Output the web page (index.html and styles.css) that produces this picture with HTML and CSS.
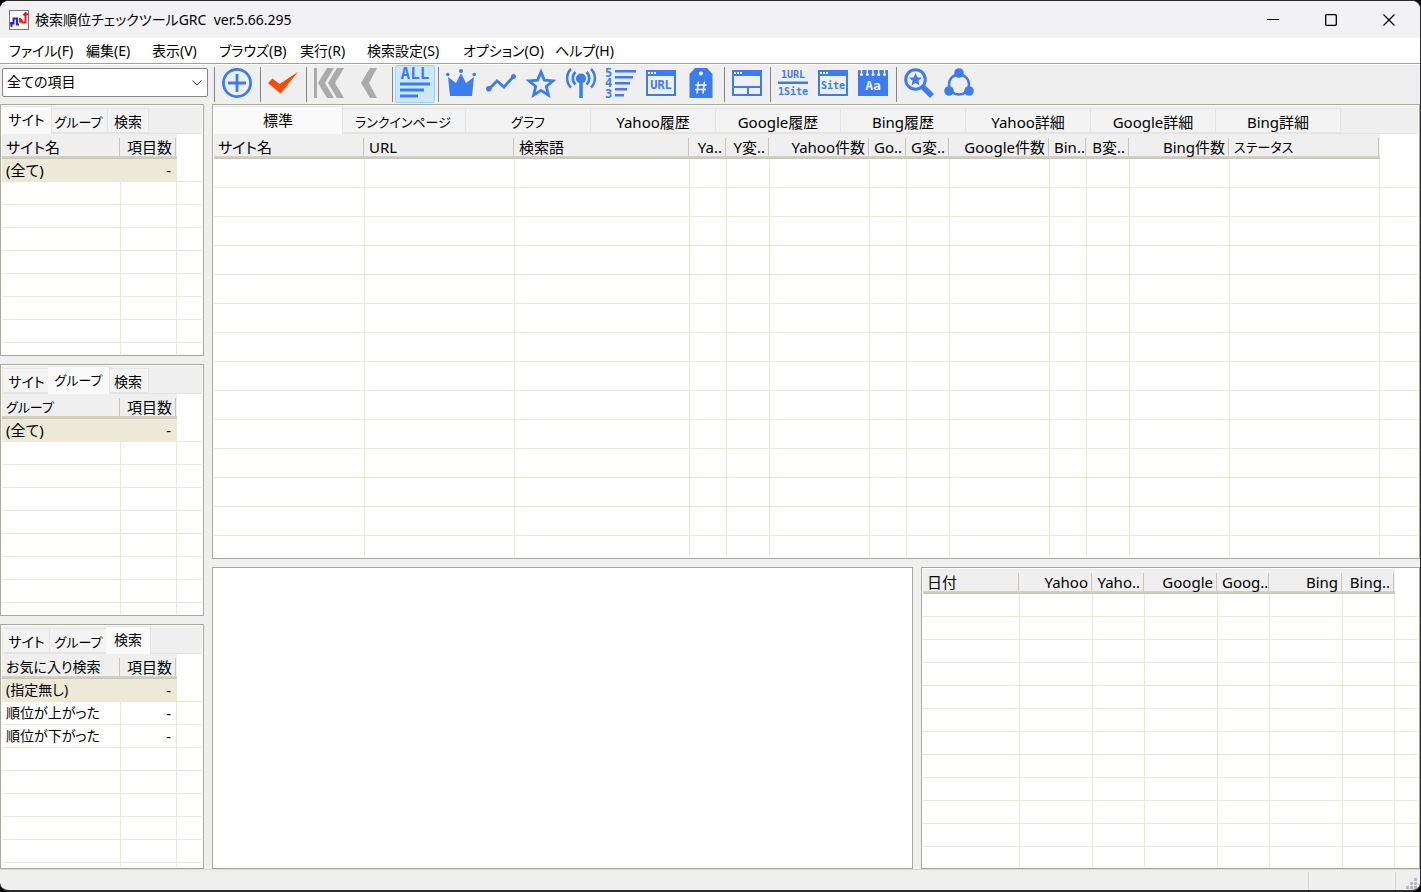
FILE: index.html
```html
<!DOCTYPE html>
<html lang="ja">
<head>
<meta charset="utf-8">
<title>検索順位チェックツールGRC</title>
<link rel="stylesheet" href="styles.css">
</head>
<body>
<div class="window">
  <header class="titlebar">
    <svg class="app-icon" width="20" height="20" viewBox="0 0 20 20"><rect x=".5" y=".5" width="19" height="19" fill="#fff" stroke="#777"/><path d="M2.500 17v-5M1 13.500h3.500V8.500h3.500v6h2" fill="none" stroke="#2020f0" stroke-width="2"/><path d="M11 12.500V8M12 9l1.500 3.500h3V4M14.500 5.500L16.500 3l2.500 2" fill="none" stroke="#f01818" stroke-width="2"/></svg>
    <h1 class="title">検索順位チェックツールGRC&nbsp; ver.5.66.295</h1>
    <div class="window-controls">
      <button class="win-btn" aria-label="最小化"><svg width="12" height="12"><path d="M0 5.500h12" stroke="#000"/></svg></button>
      <button class="win-btn" aria-label="最大化"><svg width="12" height="12"><rect x=".7" y=".7" width="10.600" height="10.600" rx="1" fill="none" stroke="#000" stroke-width="1.300"/></svg></button>
      <button class="win-btn" aria-label="閉じる"><svg width="12" height="12"><path d="M.5.5l11 11M11.500.5l-11 11" stroke="#000" stroke-width="1.200"/></svg></button>
    </div>
  </header>
  <nav class="menubar">
    <button>ファイル(F)</button><button>編集(E)</button><button>表示(V)</button><button>ブラウズ(B)</button><button>実行(R)</button><button>検索設定(S)</button><button>オプション(O)</button><button>ヘルプ(H)</button>
  </nav>
  <div class="toolbar">
    <div class="combo">
      <select class="combo-select" aria-label="項目"><option>全ての項目</option></select>
      <svg class="combo-arrow" width="10" height="6"><path d="M.5.5L5 5 9.500.5" fill="none" stroke="#444"/></svg>
    </div>
    <span class="sep"></span>
    <button class="tool" aria-label="追加"><svg viewBox="0 0 30 30"><circle cx="15" cy="15" r="13.600" fill="none" stroke="#3b7df0" stroke-width="2.800"/><path d="M15 6v18M6 15h18" stroke="#3b7df0" stroke-width="2.800"/></svg></button>
    <span class="sep"></span>
    <button class="tool" aria-label="チェック"><svg viewBox="0 0 30 30"><path d="M0 15l4.500-4.500 7 5.500L30 4 12.500 25.500z" fill="#ff4800"/></svg></button>
    <span class="sep"></span>
    <button class="tool" aria-label="最初へ"><svg viewBox="0 0 30 30" fill="#ababab"><path d="M0 0h3v30H0zM13 0h7l-9 15 9 15h-7L4 15zM23 0h7l-9 15 9 15h-7l-9-15z"/></svg></button>
    <button class="tool" aria-label="前へ"><svg viewBox="0 0 30 30" fill="#ababab"><path d="M16 0h7l-8 15 8 15h-7L7 15z"/></svg></button>
    <span class="sep"></span>
    <button class="tool selected" aria-label="全て表示"><svg viewBox="0 0 30 30" fill="#3b7df0"><text class="glyph" x="15" y="11" font-size="16" text-anchor="middle">ALL</text><path d="M0 14.500h30v3H0zM0 20.500h24v3H0zM0 26.500h18v3H0z"/></svg></button>
    <span class="sep"></span>
    <button class="tool" aria-label="王冠"><svg viewBox="0 0 30 30" fill="#3b7df0"><path d="M2 9l8 6 5-10 5 10 8-6-2 19H4z"/><circle cx="1.800" cy="6.500" r="1.800"/><circle cx="15" cy="3" r="2"/><circle cx="28.200" cy="6.500" r="1.800"/></svg></button>
    <button class="tool" aria-label="変動"><svg viewBox="0 0 30 30"><path d="M3 21l8-8 7 6L28 8" fill="none" stroke="#3b7df0" stroke-width="2.800"/><g fill="#3b7df0"><circle cx="2.800" cy="20.800" r="2.800"/><circle cx="27.500" cy="8.500" r="2.500"/></g></svg></button>
    <button class="tool" aria-label="お気に入り"><svg viewBox="0 0 30 30"><path d="M15 4l3.300 8.100 8.700.7-6.700 5.700 2.100 8.600-7.400-4.700-7.400 4.700 2.100-8.600L3 12.800l8.700-.7z" fill="none" stroke="#3b7df0" stroke-width="2.800"/></svg></button>
    <button class="tool" aria-label="電波"><svg viewBox="0 0 30 30"><g fill="none" stroke="#3b7df0" stroke-width="2.500"><path d="M5 1a13 13 0 0 0 0 18.500M9.500 4a8.500 8.500 0 0 0 0 12.500M25 1a13 13 0 0 1 0 18.500M20.500 4a8.500 8.500 0 0 1 0 12.500"/><path d="M15 10v20" stroke-width="3.500"/></g><circle cx="15" cy="10.500" r="5" fill="#3b7df0"/></svg></button>
    <button class="tool" aria-label="順位"><svg viewBox="0 0 30 30" fill="#3b7df0"><text class="glyph" font-size="12"><tspan x="-1" y="9">5</tspan><tspan x="-1" y="19">4</tspan><tspan x="-1" y="30">3</tspan></text><path d="M9 2h21v2.500H9zM9 8h18v2.500H9zM9 14h15v2.500H9zM9 20h12v2.500H9zM9 26h9v2.500H9z"/></svg></button>
    <button class="tool" aria-label="URL"><svg viewBox="0 0 30 30" fill="#3b7df0"><path fill-rule="evenodd" d="M0 2h30v26H0zM2 8v18h26V8zM2 4v2h2V4zM5 4v2h2V4zM8 4v2h2V4z"/><text class="glyph" x="15" y="21" font-size="12" text-anchor="middle">URL</text></svg></button>
    <button class="tool" aria-label="タグ"><svg viewBox="0 0 30 30"><path d="M9 0h12l5.500 6v24h-23V6z" fill="#3b7df0"/><circle cx="15" cy="5.500" r="2" fill="#fff"/><path d="M12.500 13.500l-1.500 12M18.500 13.500l-1.500 12M9.500 17h11M9 21.500h11" stroke="#fff" stroke-width="1.500"/></svg></button>
    <span class="sep"></span>
    <button class="tool" aria-label="分割表示"><svg viewBox="0 0 30 30" fill="#3b7df0"><path fill-rule="evenodd" d="M0 2h30v26H0zM2 8v10h26V8zM2 20v6h13v-6zM17 20v6h11v-6zM2 4v2h2V4zM5 4v2h2V4zM8 4v2h2V4z"/></svg></button>
    <span class="sep"></span>
    <button class="tool" aria-label="1URL 1Site"><svg viewBox="0 0 30 30" fill="#3b7df0"><text class="glyph" font-size="10" text-anchor="middle"><tspan x="15" y="10">1URL</tspan><tspan x="15" y="27">1Site</tspan></text><path d="M0 13.500h30v2.500H0z"/></svg></button>
    <button class="tool" aria-label="Site"><svg viewBox="0 0 30 30" fill="#3b7df0"><path fill-rule="evenodd" d="M0 2h30v26H0zM2 8v18h26V8zM2 4v2h2V4zM5 4v2h2V4zM8 4v2h2V4z"/><text class="glyph" x="15" y="21" font-size="10" text-anchor="middle">Site</text></svg></button>
    <button class="tool" aria-label="メモ"><svg viewBox="0 0 30 30"><path d="M0 2h30v26H0z" fill="#3b7df0"/><path d="M3.500 1v6M9.300 1v6M15 1v6M20.700 1v6M26.500 1v6" stroke="#efefef" stroke-width="1.500"/><g fill="#efefef"><circle cx="3.500" cy="6.500" r="1.500"/><circle cx="9.300" cy="6.500" r="1.500"/><circle cx="15" cy="6.500" r="1.500"/><circle cx="20.700" cy="6.500" r="1.500"/><circle cx="26.500" cy="6.500" r="1.500"/><text class="glyph" x="15" y="22" font-size="13" text-anchor="middle">Aa</text></g></svg></button>
    <span class="sep"></span>
    <button class="tool" aria-label="お気に入り検索"><svg viewBox="0 0 30 30"><circle cx="11.500" cy="11.500" r="9.800" fill="none" stroke="#3b7df0" stroke-width="3"/><path d="M19 19l9 9" stroke="#3b7df0" stroke-width="5.500"/><path d="M11.500 5l1.800 4.300 4.700.4-3.600 3.100 1.100 4.600-4-2.400-4 2.400 1.100-4.600L5 9.700l4.700-.4z" fill="#3b7df0"/></svg></button>
    <button class="tool" aria-label="共有"><svg viewBox="0 0 30 30"><circle cx="15" cy="16.500" r="10" fill="none" stroke="#3b7df0" stroke-width="2.500"/><g fill="#3b7df0"><circle cx="15" cy="5" r="4.800"/><circle cx="5" cy="23" r="4.800"/><circle cx="25" cy="23" r="4.800"/></g></svg></button>
  </div>
  <main class="workspace">
    <aside class="sidebar">
      <section class="panel">
        <div class="tabs side-tabs"><button class="tab active">サイト</button><button class="tab kana">グループ</button><button class="tab">検索</button></div>
        <div class="grid-view"><table data-rows="8">
          <colgroup><col class="w-name"><col class="w-count"><col></colgroup>
          <thead><tr><th>サイト名</th><th class="num">項目数</th><td></td></tr></thead>
          <tbody><tr class="picked"><td>(全て)</td><td class="num">-</td><td></td></tr></tbody>
        </table></div>
      </section>
      <section class="panel">
        <div class="tabs side-tabs"><button class="tab">サイト</button><button class="tab kana active">グループ</button><button class="tab">検索</button></div>
        <div class="grid-view"><table data-rows="8">
          <colgroup><col class="w-name"><col class="w-count"><col></colgroup>
          <thead><tr><th class="kana">グループ</th><th class="num">項目数</th><td></td></tr></thead>
          <tbody><tr class="picked"><td>(全て)</td><td class="num">-</td><td></td></tr></tbody>
        </table></div>
      </section>
      <section class="panel">
        <div class="tabs side-tabs"><button class="tab">サイト</button><button class="tab kana">グループ</button><button class="tab active">検索</button></div>
        <div class="grid-view"><table class="wordy" data-rows="6">
          <colgroup><col class="w-name"><col class="w-count"><col></colgroup>
          <thead><tr><th>お気に入り検索</th><th class="num">項目数</th><td></td></tr></thead>
          <tbody><tr class="picked"><td>(指定無し)</td><td class="num">-</td><td></td></tr><tr><td>順位が上がった</td><td class="num">-</td><td></td></tr><tr><td>順位が下がった</td><td class="num">-</td><td></td></tr></tbody>
        </table></div>
      </section>
    </aside>
    <div class="content">
      <section class="panel">
        <div class="tabs main-tabs"><button class="tab active">標準</button><button class="tab kana">ランクインページ</button><button class="tab kana">グラフ</button><button class="tab">Yahoo履歴</button><button class="tab">Google履歴</button><button class="tab">Bing履歴</button><button class="tab">Yahoo詳細</button><button class="tab">Google詳細</button><button class="tab">Bing詳細</button></div>
        <div class="grid-view tall"><table data-rows="14">
          <colgroup><col class="w-site"><col class="w-url"><col class="w-word"><col class="w-rank"><col class="w-diff"><col class="w-hits"><col class="w-rank"><col class="w-diff"><col class="w-hits"><col class="w-rank"><col class="w-diff"><col class="w-hits"><col class="w-url"><col></colgroup>
          <thead><tr><th>サイト名</th><th>URL</th><th>検索語</th><th class="num">Ya..</th><th class="num">Y変..</th><th class="num">Yahoo件数</th><th class="num">Go..</th><th class="num">G変..</th><th class="num">Google件数</th><th class="num">Bin..</th><th class="num">B変..</th><th class="num">Bing件数</th><th class="kana">ステータス</th><td></td></tr></thead>
          <tbody></tbody>
        </table></div>
      </section>
      <div class="lower">
        <section class="panel"></section>
        <section class="panel">
          <div class="grid-view"><table data-rows="12">
            <colgroup><col class="w-date"><col class="w-engine"><col class="w-change"><col class="w-engine"><col class="w-change"><col class="w-engine"><col class="w-change"><col></colgroup>
            <thead><tr><th>日付</th><th class="num">Yahoo</th><th class="num">Yaho..</th><th class="num">Google</th><th class="num">Goog..</th><th class="num">Bing</th><th class="num">Bing..</th><td></td></tr></thead>
            <tbody></tbody>
          </table></div>
        </section>
      </div>
    </div>
  </main>
  <footer class="statusbar"><span class="status-cell"></span><span class="status-end"><svg width="12" height="12" fill="#b8b8b8"><path d="M9 1h3v3H9zM5 5h3v3H5zM9 5h3v3H9zM1 9h3v3H1zM5 9h3v3H5zM9 9h3v3H9z"/></svg></span></footer>
</div>
<script src="script.js"></script>
</body>
</html>
```
FILE: styles.css
```css
* { box-sizing: border-box; }
html, body { height: 100%; }
body {
  margin: 0;
  background: #000;
  color: #000;
  font: 15px/20px "Noto Sans", "Noto Sans CJK JP", sans-serif;
  font-feature-settings: "palt";
}
button, select { font: inherit; font-feature-settings: inherit; color: inherit; border: 0; padding: 0; margin: 0; background: none; }
svg { display: block; overflow: visible; }
.window {
  height: 100vh;
  display: flex;
  flex-direction: column;
  background: #efefef;
  border: solid #2b2b2f;
  border-width: 1px 1px 2px 0;
  border-radius: 9px;
  overflow: hidden;
}
.titlebar { flex: none; height: 37px; display: flex; align-items: center; padding: 0 2px 0 9px; background: #f2f2f4; }
.title { flex: 1; margin: 0 0 0 6px; font-size: 14px; font-weight: 400; }
.window-controls { display: flex; }
.win-btn { width: 58px; height: 36px; display: grid; place-items: center; }
.menubar {
  flex: none;
  height: 26px;
  display: grid;
  grid-template-columns: 77px 66px 67px 81px 67px 96px 92px auto;
  justify-content: start;
  align-items: center;
  padding-left: 9px;
  background: #fff;
  border-bottom: 1px solid #a2a2a2;
  font-size: 14px;
}
.menubar button { text-align: left; white-space: nowrap; }
.toolbar { flex: none; height: 40px; display: flex; border-top: 1px solid #fff; }
.combo { position: relative; width: 211px; padding: 3px 3px 0 2px; }
.combo-select {
  display: block;
  appearance: none;
  width: 100%;
  height: 29px;
  padding: 0 4px 2px;
  background: #fff;
  border: 1px solid #868686;
  border-radius: 2px;
  font-size: 14px;
}
.combo-arrow { position: absolute; right: 9px; top: 15px; pointer-events: none; }
.sep { width: 6px; margin: 2px 0; background: linear-gradient(#858585, #858585) 3px 0 / 1px 100% no-repeat; }
.tool { width: 40px; height: 38px; padding: 2px 4px 4px; border: 1px solid transparent; border-radius: 3px; }
.tool svg { width: 30px; height: 30px; }
.tool.selected { background: #cce8ff; border-color: #99d1ff; }
.glyph { font-family: "DejaVu Sans Mono", monospace; font-weight: 700; }
.workspace { flex: 1; min-height: 0; display: flex; gap: 8px; }
.sidebar { width: 204px; display: grid; grid-template-rows: 252fr 252fr 245fr; gap: 8px; }
.content { flex: 1; min-width: 0; display: grid; grid-template-rows: 455fr 302fr; gap: 8px; }
.lower { min-height: 0; display: grid; grid-template-columns: 701fr 499fr; gap: 8px; }
.panel { min-width: 0; min-height: 0; display: flex; flex-direction: column; padding: 1px; background: #fff; border: 1px solid #aaa997; }
.tabs { flex: none; height: 28px; display: flex; padding: 0 2px; background: #efefef; border-bottom: 1px solid #e4e4e4; }
.tab { height: 25px; margin-top: 2px; padding-top: 2px; background: #f3f3f3; border: 1px solid #e4e4e4; border-left-width: 0; white-space: nowrap; }
.tab.active { position: relative; height: 28px; margin: 0 -2px; padding: 0 0 1px; background: #fafafa; border-bottom: 0; }
.side-tabs .tab { width: 46px; font-size: 14px; }
.side-tabs .tab:nth-child(2) { width: 58px; }
.side-tabs .tab:nth-child(3) { width: 41px; }
.side-tabs .tab.active { width: 50px; }
.side-tabs .tab.active:nth-child(2) { width: 62px; }
.side-tabs .tab.active:nth-child(3) { width: 45px; }
.main-tabs .tab { width: 125px; }
.main-tabs .tab.active { width: 129px; }
.grid-view { flex: 1 1 0; min-height: 0; overflow: hidden; }
table { width: 100%; table-layout: fixed; border-collapse: separate; border-spacing: 0; }
th, td { height: 23px; padding: 0 4px; font-weight: 400; text-align: left; white-space: nowrap; overflow: hidden; border: solid #ece9d8; border-width: 0 1px 1px 0; }
td:last-child { border-right: 0; }
th {
  height: 25px;
  padding: 1px 4px 0;
  border: 0;
  background: linear-gradient(#c8c5b2, #c8c5b2) right 1px top 4px / 1px 18px no-repeat, linear-gradient(#efefef 22px, #d8d4c4 22px, #c9c5b4 25px);
}
thead td { height: 25px; border: 0; }
.num.num { padding-right: 5px; text-align: right; }
.tall tbody td { height: 29px; }
.picked td:not(:last-child) { background: #ece9d8; }
.wordy tr > :first-child { font-size: 14px; }
.side-tabs .tab.kana, .kana { font-size: 13px; }
.w-name { width: 119px; }
.w-count { width: 56px; }
.w-site { width: 151px; }
.w-url { width: 150px; }
.w-word { width: 175px; }
.w-rank { width: 37px; }
.w-diff { width: 43px; }
.w-hits { width: 100px; }
.w-date { width: 97px; }
.w-engine { width: 73px; }
.w-change { width: 52px; }
.statusbar { flex: none; height: 21px; display: flex; justify-content: flex-end; padding-top: 2px; border-top: 1px solid #d8d8d8; }
.status-cell { width: 88px; border: solid #d2d2d2; border-width: 0 1px; }
.status-end { width: 24px; display: flex; align-items: flex-end; justify-content: flex-end; padding: 0 3px 1px 0; }
```
FILE: script.js
```js
document.querySelectorAll("table[data-rows]").forEach((table) => {
  const columns = table.querySelectorAll("col").length;
  const body = table.tBodies[0];
  for (let i = 0; i < Number(table.dataset.rows); i++) {
    const row = body.insertRow();
    for (let c = 0; c < columns; c++) row.insertCell();
  }
});
```
